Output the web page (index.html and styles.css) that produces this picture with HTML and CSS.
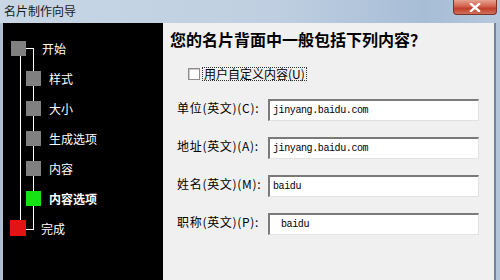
FILE: index.html
```html
<!DOCTYPE html>
<html>
<head>
    <title>名片制作向导</title>
    <link rel="stylesheet" href="styles.css">
</head>
<body>
    <div class="window">
        <div class="titlebar">
            <span class="title">名片制作向导</span>
            <div class="close-btn">
                <svg width="12" height="9" viewBox="0 0 12 9">
                    <path d="M2 1 L10 8 M10 1 L2 8" stroke="#fff" stroke-width="2.4" stroke-linecap="square"/>
                </svg>
            </div>
        </div>

        <div class="window-body">
            <div class="frame-left"></div>

            <div class="nav">
                <div class="tree-bracket"></div>
                <div class="tree-trunk"></div>

                <div class="step step-root">
                    <span class="box box-gray"></span>
                    <span class="step-label">开始</span>
                </div>
                <div class="step step-child">
                    <span class="box box-gray"></span>
                    <span class="step-label">样式</span>
                </div>
                <div class="step step-child">
                    <span class="box box-gray"></span>
                    <span class="step-label">大小</span>
                </div>
                <div class="step step-child">
                    <span class="box box-gray"></span>
                    <span class="step-label">生成选项</span>
                </div>
                <div class="step step-child">
                    <span class="box box-gray"></span>
                    <span class="step-label">内容</span>
                </div>
                <div class="step step-child step-current">
                    <span class="box box-green"></span>
                    <span class="step-label">内容选项</span>
                </div>
                <div class="step step-root">
                    <span class="box box-red"></span>
                    <span class="step-label">完成</span>
                </div>
            </div>

            <div class="content">
                <h1 class="question">您的名片背面中一般包括下列内容？</h1>

                <label class="check-row">
                    <span class="checkbox"></span>
                    <span class="check-label">用户自定义内容(U)</span>
                </label>

                <div class="fields">
                    <span class="field-label">单位(英文)(C):</span>
                    <input class="field-input" type="text" value="jinyang.baidu.com" readonly>

                    <span class="field-label">地址(英文)(A):</span>
                    <input class="field-input" type="text" value="jinyang.baidu.com" readonly>

                    <span class="field-label">姓名(英文)(M):</span>
                    <input class="field-input" type="text" value="baidu" readonly>

                    <span class="field-label">职称(英文)(P):</span>
                    <input class="field-input field-indent" type="text" value="baidu" readonly>
                </div>
            </div>

            <div class="frame-right"></div>
        </div>
    </div>
</body>
</html>
```

FILE: styles.css
```css
body {
    margin: 0;
    font-family: "Noto Sans CJK SC", "Noto Sans", sans-serif;
    background: #b7c9dc;
}
.window {
    width: 500px;
    height: 280px;
    display: flex;
    flex-direction: column;
    overflow: hidden;
}
.titlebar {
    height: 23px;
    flex-shrink: 0;
    display: flex;
    justify-content: space-between;
    align-items: flex-start;
    background: linear-gradient(90deg, #c8d6e5 0%, #bfcfe1 55%, #a7bdd6 85%, #b6c8dc 100%);
}
.title {
    font-size: 12px;
    line-height: 14px;
    margin: 4px 0 0 4px;
    color: #1a1a1a;
}
.close-btn {
    width: 42px;
    height: 14px;
    margin-right: 3px;
    display: flex;
    align-items: center;
    justify-content: center;
    background: linear-gradient(180deg, #e6a292 0%, #d2624e 45%, #c0402b 60%, #d0705c 100%);
    border: 1px solid #7c3328;
    border-top: none;
    border-radius: 0 0 4px 4px;
}
.window-body {
    flex: 1;
    display: flex;
}
.frame-left {
    width: 3px;
    background: #aebfd2;
}
.nav {
    position: relative;
    width: 160px;
    background: #000;
    padding-top: 10px;
    box-sizing: border-box;
}
.tree-bracket {
    position: absolute;
    left: 23px;
    top: 25px;
    width: 7px;
    height: 180px;
    border: 1px solid #fff;
    border-left: none;
}
.tree-trunk {
    position: absolute;
    left: 17px;
    top: 32px;
    height: 166px;
    border-left: 1px solid #fff;
}
.step {
    position: relative;
    height: 30px;
    display: flex;
    align-items: center;
    color: #fff;
    font-size: 12px;
}
.box {
    width: 15px;
    height: 15px;
    flex-shrink: 0;
}
.box-gray {
    background: #808080;
}
.box-green {
    background: #16e316;
}
.box-red {
    width: 16px;
    height: 16px;
    background: #e51414;
}
.step-root .box {
    margin-left: 8px;
}
.step-root .box-red {
    margin-left: 7px;
}
.step-root .step-label {
    margin-left: 16px;
}
.step-root .box-red + .step-label {
    margin-left: 15px;
}
.step-child .box {
    margin-left: 23px;
}
.step-child .step-label {
    margin-left: 8px;
}
.step-current .step-label {
    font-weight: bold;
}
.content {
    flex: 1;
    background: #f0f0f0;
    padding: 5px 0 0 7px;
}
.question {
    margin: 0;
    font-size: 16px;
    line-height: 22px;
    font-weight: bold;
    color: #000;
}
.check-row {
    display: flex;
    align-items: center;
    margin: 17px 0 0 18px;
    height: 14px;
}
.checkbox {
    width: 10px;
    height: 10px;
    background: #fff;
    border: 1px solid #8f8f8f;
    box-shadow: inset 1px 1px #c8c8c8;
}
.check-label {
    margin-left: 2px;
    padding: 0 1px;
    font-size: 12px;
    line-height: 12px;
    border: 1px dotted #333;
    color: #000;
}
.fields {
    display: grid;
    grid-template-columns: 91px 211px;
    grid-auto-rows: 22px;
    row-gap: 16px;
    margin: 18px 0 0 7px;
    align-items: center;
}
.field-label {
    font-size: 12px;
    letter-spacing: 0.7px;
    color: #000;
    margin-top: -6px;
}
.field-input {
    box-sizing: border-box;
    width: 211px;
    height: 22px;
    margin: 0;
    padding: 0 0 0 3px;
    background: #fff;
    border-style: solid;
    border-width: 2px 1px 1px 2px;
    border-color: #7a7a7a #e2e2e2 #e2e2e2 #7a7a7a;
    outline: none;
    font-family: "Liberation Mono", monospace;
    font-size: 10px;
    letter-spacing: -0.4px;
    color: #000;
}
.field-indent {
    padding-left: 11px;
}
.frame-right {
    width: 6px;
    background: #b3c5d8;
    border-left: 2px solid #71849a;
    box-sizing: border-box;
}
```
